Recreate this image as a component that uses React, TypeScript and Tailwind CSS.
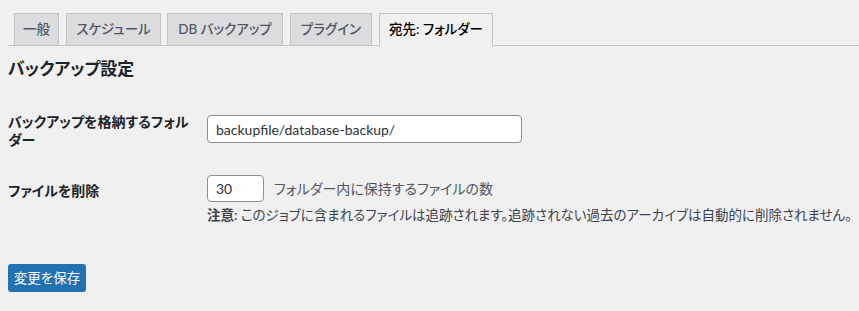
import React from "react";

const tabs = [
  { label: "一般", width: "w-[45px]", margin: "ml-[6px]", active: false },
  { label: "スケジュール", width: "w-[95px]", margin: "ml-[7px]", active: false },
  { label: "DB バックアップ", width: "w-[116px]", margin: "ml-[6px]", active: false },
  { label: "プラグイン", width: "w-[82px]", margin: "ml-[7px]", active: false },
  { label: "宛先: フォルダー", width: "w-[114px]", margin: "ml-[7px]", active: true },
];

export default function App() {
  return (
    <div className="min-h-[311px] w-full bg-[#f0f0f1] font-['Lato','Noto_Sans_CJK_JP',sans-serif] text-[#1d2327] [font-feature-settings:'palt']">
      {/* Tab bar */}
      <nav className="ml-[8px] flex border-b border-[#c3c4c7] pt-[13px]">
        {tabs.map((tab) => (
          <a
            key={tab.label}
            className={`${tab.width} ${tab.margin} -mb-px flex h-[33px] items-center justify-center border text-[13.5px] font-medium ${
              tab.active
                ? "border-[#c3c4c7] border-b-[#f0f0f1] bg-[#f0f0f1] text-black"
                : "border-[#c3c4c7] bg-[#dcdcde] text-[#50575e]"
            }`}
          >
            {tab.label}
          </a>
        ))}
      </nav>

      <main className="px-[8px]">
        <h2 className="mt-[13px] text-[17px] font-semibold leading-[20px] text-[#1d2327]">
          バックアップ設定
        </h2>

        {/* Folder row */}
        <div className="mt-[34px] flex">
          <label
            htmlFor="backupdir"
            className="w-[199px] shrink-0 pr-[14px] text-[14px] font-semibold leading-[18px]"
          >
            バックアップを格納するフォルダー
          </label>
          <input
            id="backupdir"
            type="text"
            defaultValue="backupfile/database-backup/"
            className="mt-[2px] h-[28px] w-[315px] rounded-[4px] border border-[#8c8f94] bg-white px-[8px] text-[14px] text-[#2c3338] outline-none"
          />
        </div>

        {/* Max files row */}
        <div className="mt-[26px] flex">
          <label
            htmlFor="maxbackups"
            className="mt-[7px] w-[199px] shrink-0 pr-[14px] text-[14px] font-semibold leading-[18px]"
          >
            ファイルを削除
          </label>
          <div className="flex flex-col">
            <div className="flex items-center">
              <input
                id="maxbackups"
                type="text"
                defaultValue="30"
                className="h-[27px] w-[57px] rounded-[4px] border border-[#8c8f94] bg-white px-[8px] text-[14px] text-[#2c3338] outline-none"
              />
              <span className="ml-[10px] text-[14px] leading-[18px] text-[#50575e]">
                フォルダー内に保持するファイルの数
              </span>
            </div>
            <p className="mt-[4px] whitespace-nowrap text-[13.5px] leading-[18px] text-[#3c434a]">
              <strong className="font-semibold">注意:</strong> このジョブに含まれるファイルは追跡されます。追跡されない過去のアーカイブは自動的に削除されません。
            </p>
          </div>
        </div>

        <button className="mt-[40px] h-[28px] w-[78px] rounded-[3px] bg-[#2271b1] text-[13.5px] text-white">
          変更を保存
        </button>
      </main>
    </div>
  );
}
